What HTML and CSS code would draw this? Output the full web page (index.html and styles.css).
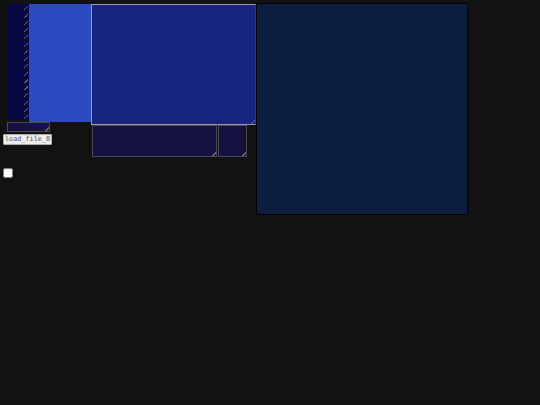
FILE: index.html
```html
<!DOCTYPE html>
<html>
<head>
<meta charset="utf-8">
<link rel="stylesheet" href="styles.css">
</head>
<body>
<div class="page">
  <div class="col1">
    <div class="toprow">
      <div class="stack">
        <textarea class="cell"></textarea><textarea class="cell"></textarea><textarea class="cell"></textarea><textarea class="cell"></textarea>
        <textarea class="cell"></textarea><textarea class="cell"></textarea><textarea class="cell"></textarea><textarea class="cell"></textarea>
        <textarea class="cell"></textarea><textarea class="cell"></textarea><textarea class="cell"></textarea><textarea class="cell"></textarea>
        <textarea class="cell"></textarea><textarea class="cell"></textarea><textarea class="cell"></textarea><textarea class="cell"></textarea>
      </div>
      <div class="bluebox"></div>
    </div>
    <textarea class="small"></textarea>
    <button class="btn">load_file_0</button>
    <input type="checkbox" class="chk">
  </div>
  <div class="col2">
    <textarea class="big"></textarea>
    <div class="lowrow">
      <textarea class="low1"></textarea>
      <textarea class="low2"></textarea>
    </div>
  </div>
  <div class="panel"></div>
</div>
</body>
</html>
```
FILE: styles.css
```css
html, body {
  margin: 0;
  padding: 0;
  background: #121212;
  width: 540px;
  height: 405px;
  overflow: hidden;
}
.page {
  display: flex;
  align-items: flex-start;
  padding-top: 4px;
  padding-left: 3px;
}
textarea {
  display: block;
  box-sizing: border-box;
  margin: 0;
  padding: 0;
  outline: none;
  resize: none;
  background-image: linear-gradient(135deg, transparent 55%, rgba(160, 160, 175, 0.6) 55%, rgba(160, 160, 175, 0.6) 70%, transparent 70%);
  background-size: 5px 5px;
  background-repeat: no-repeat;
  background-position: right 0 bottom 0;
}
.col1 {
  display: flex;
  flex-direction: column;
  align-items: flex-start;
  width: 88px;
}
.toprow {
  display: flex;
  align-items: flex-start;
  margin-left: 4px;
}
.stack {
  display: flex;
  flex-direction: column;
  width: 22px;
  height: 116px;
}
.cell {
  width: 22px;
  height: 7.25px;
  background-color: #07074a;
  border: 1px solid #0a0a3a;
}
.bluebox {
  width: 62px;
  height: 118px;
  background: #2e4ac3;
}
.small {
  margin-left: 4px;
  width: 43px;
  height: 10px;
  background-color: #15123f;
  border: 1px solid #4a4a55;
}
.btn {
  margin-top: 2px;
  width: 49px;
  height: 11px;
  padding: 0;
  box-sizing: border-box;
  background: #eeeeee;
  border: 1px solid #aaa;
  border-radius: 1px;
  color: #555;
  font-family: "DejaVu Sans Mono", monospace;
  font-size: 6.8px;
  line-height: 9px;
  text-align: center;
  white-space: nowrap;
  overflow: hidden;
}
.chk {
  margin: 23px 0 0 0;
  width: 10px;
  height: 10px;
}
.col2 {
  display: flex;
  flex-direction: column;
  align-items: flex-start;
  width: 165px;
}
.big {
  width: 165px;
  height: 121px;
  background-color: #16237f;
  border: 1px solid #9a9aa8;
  border-right-color: #3a3a60;
}
.lowrow {
  display: flex;
  gap: 1px;
  margin-left: 1px;
}
.low1 {
  width: 125px;
  height: 32px;
  background-color: #15123f;
  border: 1px solid #4a4a55;
}
.low2 {
  width: 29px;
  height: 32px;
  background-color: #15123f;
  border: 1px solid #4a4a55;
}
.panel {
  box-sizing: border-box;
  width: 212px;
  height: 212px;
  margin-top: -1px;
  background: #0d1f40;
  border: 1px solid #000;
}
```
